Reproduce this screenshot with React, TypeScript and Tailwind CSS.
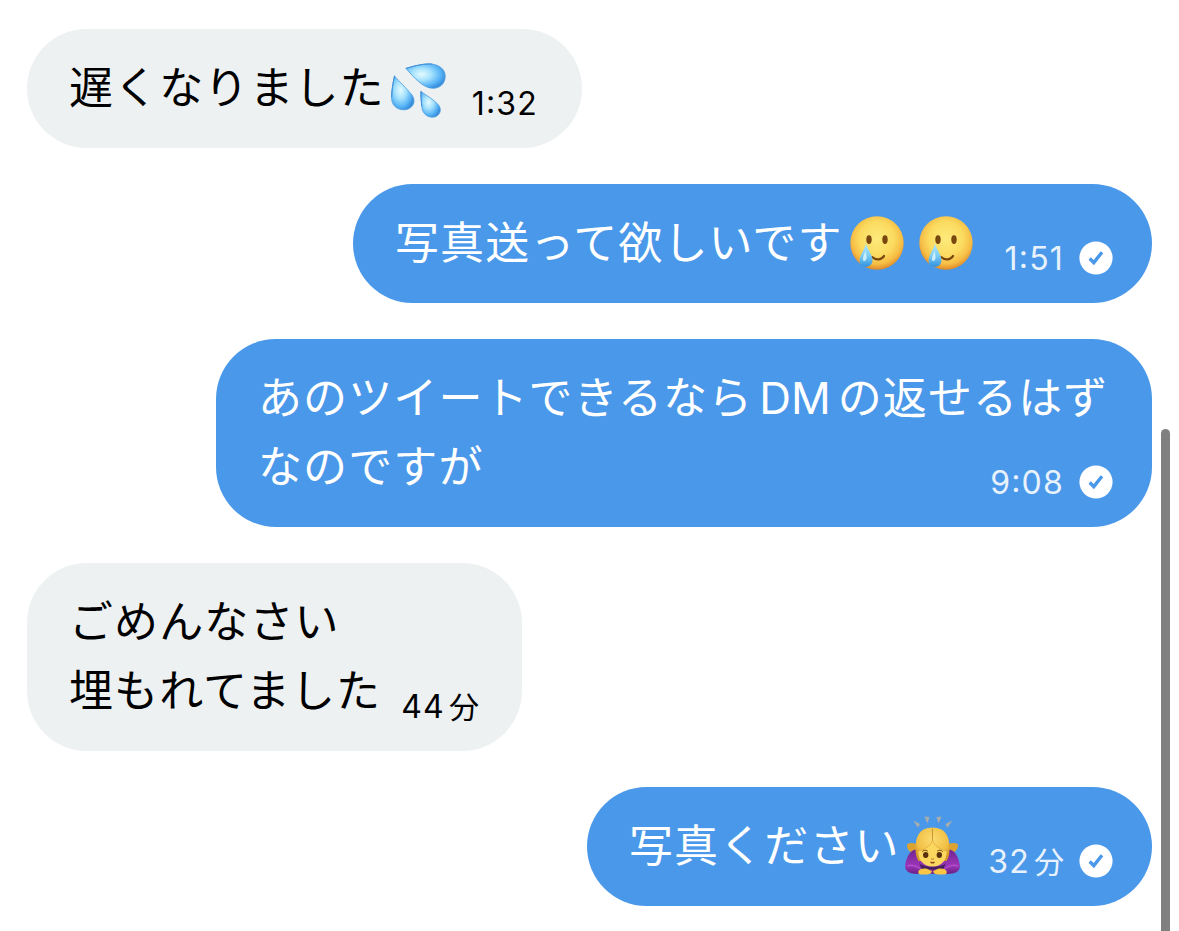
import type { ReactNode } from 'react';
import clsx from 'clsx';

interface MessageProps {
  side: 'in' | 'out';
  width: string;
  time: ReactNode;
  children: ReactNode;
}

function SweatDrops() {
  return (
    <svg viewBox="0 0 69 69" className="h-[69px] w-[69px] shrink-0" role="img" aria-label="汗">
      <defs>
        <radialGradient id="drop" cx="0.4" cy="0.42" r="0.62">
          <stop offset="0" stopColor="#e3faff" />
          <stop offset="0.4" stopColor="#a6e2fd" />
          <stop offset="0.8" stopColor="#55b2f5" />
          <stop offset="1" stopColor="#3b90dc" />
        </radialGradient>
      </defs>
      <g fill="url(#drop)" stroke="#4a9be0" strokeWidth="0.8" strokeLinejoin="round">
        <path d="M22 14.5C32 11.500 41 9.500 48 10.200C56 11 61.500 15.800 61.200 22.800C60.900 30 55.500 34.500 48.500 34.300C39 34 30 23.500 22 14.500Z" />
        <path d="M10.500 22C15.500 28 21.500 33 28 41C33 48 28 55.800 20 55.800C12 55.800 7.500 50.500 7.600 43.500C7.700 36 9 29 10.500 22Z" />
        <path d="M37 37.500C43 42 50 45.500 54.500 51C58.800 56.500 55 63.200 48.500 63.200C42 63.200 38.200 58.500 37.800 52.500C37.400 47 36.600 42 37 37.500Z" />
      </g>
      <g fill="none" stroke="#3f8fd8" strokeWidth="1" strokeLinecap="round">
        <path d="M22 14.300C32 11.300 41 9.300 48 10" />
        <path d="M10.500 22C9 29 7.700 36 7.600 43" />
        <path d="M37 37.500C36.600 42 37.400 47 37.800 52" />
      </g>
    </svg>
  );
}

function TearFace() {
  return (
    <svg viewBox="0 0 69 69" className="h-[69px] w-[69px] shrink-0" role="img" aria-label="涙">
      <defs>
        <radialGradient id="face" cx="0.5" cy="0.42" r="0.58">
          <stop offset="0" stopColor="#fdea7c" />
          <stop offset="0.55" stopColor="#fbdb60" />
          <stop offset="0.82" stopColor="#f6bd45" />
          <stop offset="1" stopColor="#e0892a" />
        </radialGradient>
        <linearGradient id="tear" x1="0" y1="0" x2="0" y2="1">
          <stop offset="0" stopColor="#b5e6fa" />
          <stop offset="0.5" stopColor="#7fcff6" />
          <stop offset="1" stopColor="#2f93e0" />
        </linearGradient>
      </defs>
      <circle cx="34" cy="34" r="26.700" fill="url(#face)" />
      <ellipse cx="26" cy="30.600" rx="2.700" ry="4.400" fill="#78460f" />
      <ellipse cx="42" cy="30.600" rx="2.700" ry="4.400" fill="#78460f" />
      <path d="M29 48C33.500 52 39 50.500 41 47" fill="none" stroke="#78460f" strokeWidth="2.300" strokeLinecap="round" />
      <path d="M23 34.500C24.700 41 29.500 46 29.500 51.300C29.500 55.200 26.700 57.800 23 57.800C19 57.800 16.400 55.200 16.600 51.300C16.900 46 21.500 41 23 34.500Z" fill="url(#tear)" />
      <path d="M22.500 42C21 46 19.500 48.500 20 51C20.500 53 23 52 23.500 49.500C23.900 47 22.900 44.500 22.500 42Z" fill="#e3f8ff" opacity="0.8" />
    </svg>
  );
}

function BowingWoman() {
  return (
    <svg viewBox="0 0 69 69" className="h-[69px] w-[69px] shrink-0" role="img" aria-label="お辞儀">
      <defs>
        <radialGradient id="hair" cx="0.5" cy="0.35" r="0.65">
          <stop offset="0" stopColor="#fbdc72" />
          <stop offset="0.7" stopColor="#f1c044" />
          <stop offset="1" stopColor="#d3962a" />
        </radialGradient>
        <linearGradient id="sleeve" x1="0" y1="0" x2="0" y2="1">
          <stop offset="0" stopColor="#6f2690" />
          <stop offset="0.65" stopColor="#9c35b8" />
          <stop offset="1" stopColor="#6b2085" />
        </linearGradient>
      </defs>
      <g fill="#a9adab">
        <path d="M15.300 8.500L22 12L20 15.800Z" />
        <path d="M26.500 4.500L31.500 5L29.500 11.500Z" />
        <path d="M38.500 5L43.500 4.500L40.500 11.500Z" />
        <path d="M54.300 8.500L47.500 12L49.500 15.800Z" />
      </g>
      <path d="M18.500 32C15 31 11.500 30.500 9.500 32C8.300 34 9.500 37.500 12 39.500L18.500 42ZM50.500 32C54 31 57.500 30.500 59.500 32C60.700 34 59.500 37.500 57 39.500L50.500 42Z" fill="#dda331" />
      <path d="M18 37.500C12 38 8.500 45 7.200 53C6.500 60 12 62.500 24 61.800H45C57 62.500 62.500 60 61.800 53C60.500 45 57 38 51 37.500L48 46H21Z" fill="url(#sleeve)" />
      <path d="M21 51C26 56 43 56 48 51L45 57.500H24Z" fill="#45205c" />
      <path d="M9.500 54C14 51.500 19 55 22 56.500M59.500 54C55 51.500 50 55 47 56.500" fill="none" stroke="#b44fce" strokeWidth="1.300" strokeLinecap="round" />
      <path d="M17.500 36C17.500 24 22 15.500 34.500 15.500C47 15.500 51.500 24 51.500 36C51.500 42.500 50.500 46 48.500 49H20.500C18.500 46 17.500 42.500 17.500 36Z" fill="url(#hair)" />
      <path d="M20.500 39C27 37.500 33 34 34.500 28C36 34 42 37.500 48.500 39C49.500 46.500 44.500 54.500 34.500 54.500C24.500 54.500 19.500 46.500 20.500 39Z" fill="#fcd75f" />
      <path d="M34.500 16.500V28" fill="none" stroke="#c58f2c" strokeWidth="0.900" />
      <path d="M34.500 28C33 34 27 37.500 20.500 39M34.500 28C36 34 42 37.500 48.500 39" fill="none" stroke="#dca63a" strokeWidth="0.700" />
      <path d="M24.500 39.300C25.500 38 28 37.800 29.500 38.900M39.500 38.900C41 37.800 43.500 38 44.500 39.300" fill="none" stroke="#704411" strokeWidth="1" strokeLinecap="round" />
      <ellipse cx="27.700" cy="43" rx="2.700" ry="3" fill="#5b320e" />
      <ellipse cx="41.300" cy="43" rx="2.700" ry="3" fill="#5b320e" />
      <path d="M33 46.800Q34.500 47.700 36 46.800" fill="none" stroke="#bd7c22" strokeWidth="1" />
      <path d="M33 50.300Q34.500 51.300 36 50.300" fill="none" stroke="#8d3f20" strokeWidth="1.400" strokeLinecap="round" />
      <path d="M20.500 59C21.500 56.800 26 56 29.500 57L33.800 59C34 61.500 31 62.500 28 62.500H23C20.500 62.500 19.800 60.800 20.500 59Z" fill="#f8c544" />
      <path d="M48.500 59C47.500 56.800 43 56 39.500 57L35.200 59C35 61.500 38 62.500 41 62.500H46C48.500 62.500 49.200 60.800 48.500 59Z" fill="#f8c544" />
    </svg>
  );
}

function ReadMark() {
  return (
    <svg viewBox="0 0 34 34" className="ml-[15px] h-[34px] w-[34px]" aria-hidden="true">
      <circle cx="17" cy="17" r="16.600" fill="#fff" />
      <path d="M10.700 17.500L14.800 21.600L23 11.200" fill="none" stroke="#4a98e9" strokeWidth="3.400" />
    </svg>
  );
}

function Clock({ hour, minute }: { hour: string; minute: string }) {
  return (
    <>
      {hour}
      <span className="relative -top-[2px]">:</span>
      {minute}
    </>
  );
}

function MinutesAgo({ value }: { value: number }) {
  return (
    <>
      {value}
      <span className="ml-[4px] text-[30px] tracking-normal">分</span>
    </>
  );
}

function Message({ side, width, time, children }: MessageProps) {
  const out = side === 'out';
  return (
    <div
      className={clsx(
        'flex justify-between rounded-[60px] py-[25px] pl-[42px]',
        width,
        out ? 'self-end bg-[#4a98e9] pr-[39px] text-white' : 'self-start bg-[#edf1f2] text-black',
      )}
    >
      <div className="shrink-0 whitespace-nowrap text-[44px] leading-[69px] tracking-[1.1px]">{children}</div>
      <div
        className={clsx(
          'flex h-[41px] shrink-0 items-center self-end whitespace-nowrap text-[32px] leading-none tracking-[1.2px]',
          out && 'text-[#e8f2fc]',
        )}
      >
        <span className="pt-[2px]">{time}</span>
        {out && <ReadMark />}
      </div>
    </div>
  );
}

export default function App() {
  return (
    <main
      lang="ja"
      className="relative flex h-[931px] w-[1179px] flex-col gap-9 overflow-hidden bg-white pt-[29px] pr-[27px] pl-[27px] font-['Inter','Noto_Sans_CJK_JP',sans-serif]"
    >
      <Message side="in" width="w-[555px] pr-[44px]" time={<Clock hour="1" minute="32" />}>
        <div className="flex">
          遅くなりました
          <span className="-ml-[1px]"><SweatDrops /></span>
        </div>
      </Message>
      <Message side="out" width="w-[799px]" time={<Clock hour="1" minute="51" />}>
        <div className="flex">
          写真送って欲しいです
          <span className="ml-[1px] flex">
            <TearFace />
            <TearFace />
          </span>
        </div>
      </Message>
      <Message side="out" width="w-[936px]" time={<Clock hour="9" minute="08" />}>
        <div className="-mr-[200px]">
          あのツイートできるなら<span className="mr-[7px] ml-[6px] tracking-normal">DM</span>の返せるはず
        </div>
        <div>なのですが</div>
      </Message>
      <Message side="in" width="w-[495px] pr-[43px]" time={<MinutesAgo value={44} />}>
        <div>ごめんなさい</div>
        <div>埋もれてました</div>
      </Message>
      <Message side="out" width="w-[565px]" time={<MinutesAgo value={32} />}>
        <div className="flex">
          写真ください
          <span className="-ml-[2px]"><BowingWoman /></span>
        </div>
      </Message>
      {/* scrollbar thumb */}
      <div className="absolute top-[429px] right-[9px] h-[520px] w-[9px] rounded-full bg-[#808080]" />
    </main>
  );
}
